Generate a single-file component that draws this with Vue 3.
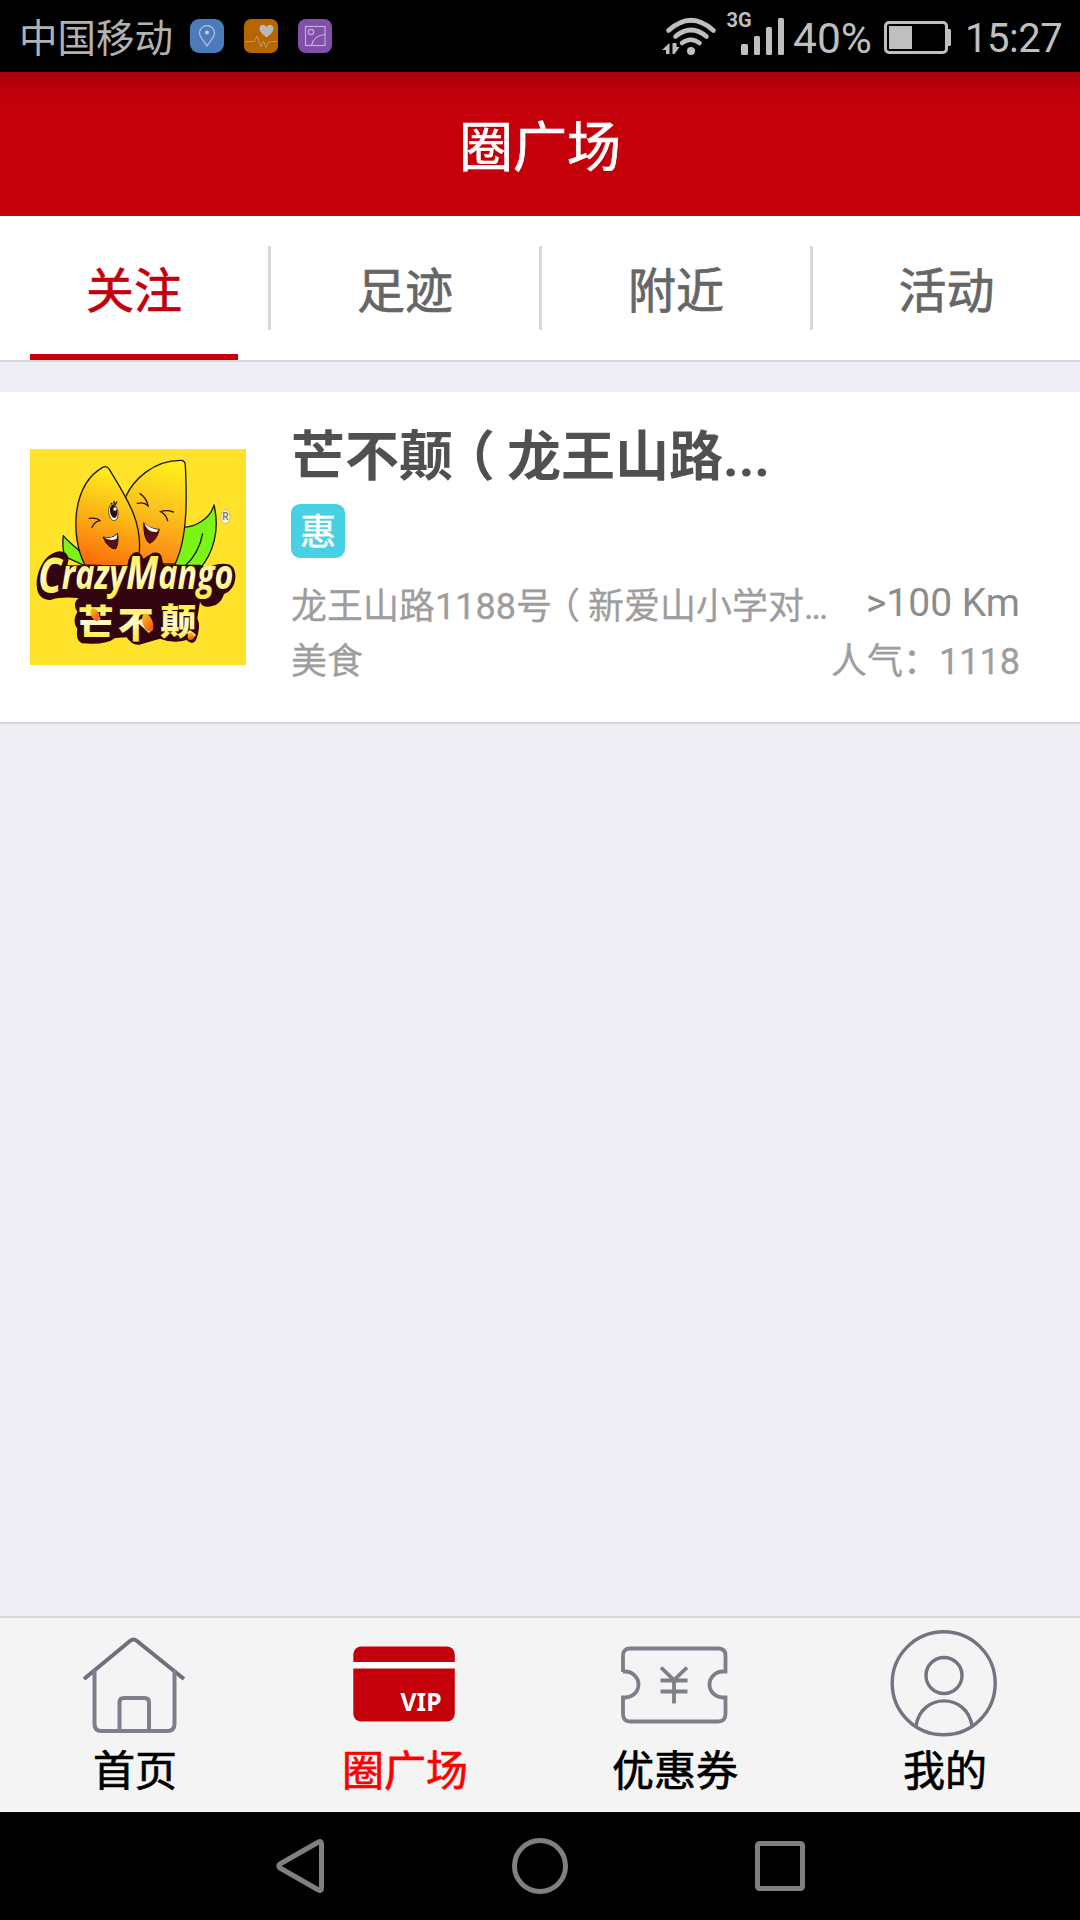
<script setup>
const tabs = ['关注', '足迹', '附近', '活动']
const activeTab = '关注'
const items = [
  { key: 'home', label: '首页' },
  { key: 'square', label: '圈广场' },
  { key: 'coupon', label: '优惠券' },
  { key: 'me', label: '我的' },
]
const current = 'square'
</script>

<template>
  <div class="screen">
    <div class="status">
      <span class="carrier">中国移动</span>
      <svg class="app-icon" viewBox="0 0 34 34">
        <rect width="34" height="34" rx="9" fill="#4b7bbb" />
        <path d="M17 27C13 21 9.500 18 9.500 14a7.500 7.300 0 0 1 15 0C24.500 18 21 21 17 27z" fill="none" stroke="#b8c4d4" stroke-width="1.2" />
        <circle cx="17" cy="13.500" r="2" fill="#c3ccd8" />
      </svg>
      <svg class="app-icon" viewBox="0 0 34 34">
        <rect width="34" height="34" rx="7" fill="#b76500" />
        <path d="M22.500 18.500C18 15 15.500 12.500 15.500 9.500c0-4 5-5 7-1.500 2-3.500 7-2.500 7 1.500 0 3-2.500 5.500-7 9z" fill="#b8b8b8" />
        <path d="M1 22.700H10L13 17l4 11 2.500-6 2.500 6.500 2.500-6 1.500 1 1.500-1H33" fill="none" stroke="#bfa27c" stroke-width="0.900" />
      </svg>
      <svg class="app-icon" viewBox="0 0 34 34">
        <rect width="34" height="34" rx="8" fill="#824fab" />
        <g fill="none" stroke="#c0afd0" stroke-width="1.2">
          <rect x="7.500" y="7.500" width="19.500" height="19" />
          <circle cx="13" cy="13" r="2.700" />
          <path d="M13.500 26.500C15 20 20 16 27 15.500" />
        </g>
      </svg>
      <svg class="signals" viewBox="0 0 126 72">
        <g fill="none" stroke="#bfbfbf" stroke-width="4.600" stroke-linecap="round">
          <path d="M8.500 30.500Q31 10 53.500 30.500" />
          <path d="M15.500 36.500Q31 23.500 46.500 36.500" />
          <path d="M22 43Q31 36.500 39.500 43" />
        </g>
        <circle cx="31" cy="51" r="4" fill="#bfbfbf" />
        <path d="M9.500 43v11H6v-4H2zM12.500 43h4v4h3l-5 7h-2z" fill="#bfbfbf" />
        <text x="66.500" y="27" class="net">3G</text>
        <g fill="#bfbfbf">
          <rect x="81" y="44" width="7" height="11" rx="1.500" />
          <rect x="94" y="36" width="6" height="19" rx="1.500" />
          <rect x="106" y="27" width="6" height="28" rx="1.500" />
          <rect x="118" y="18" width="6" height="37" rx="1.500" />
        </g>
      </svg>
      <span class="percent">40%</span>
      <svg class="battery" viewBox="0 0 68 34">
        <rect x="1.500" y="1.500" width="61" height="30" rx="3.500" fill="none" stroke="#bfbfbf" stroke-width="3" />
        <rect x="5" y="5" width="23" height="23" fill="#bfbfbf" />
        <path d="M64 8h1.500q1.500 0 1.500 1.500v14q0 1.500-1.500 1.500H64z" fill="#bfbfbf" />
      </svg>
      <span class="clock">15:27</span>
    </div>

    <header class="header">圈广场</header>

    <nav class="tabs">
      <template v-for="(t, i) in tabs" :key="t">
        <i v-if="i" class="divider"></i>
        <div class="tab" :class="{ active: t === activeTab }"><span>{{ t }}</span></div>
      </template>
    </nav>

    <main class="content">
      <article class="shop">
        <svg class="logo" viewBox="30 27 648 648">
          <defs>
            <linearGradient id="mangoL" x1="0.550" y1="0" x2="0.350" y2="1">
              <stop offset="0" stop-color="#fff11c" />
              <stop offset="0.450" stop-color="#fcba18" />
              <stop offset="1" stop-color="#fb6a08" />
            </linearGradient>
            <linearGradient id="mangoR" x1="0.600" y1="0" x2="0.450" y2="1">
              <stop offset="0" stop-color="#fff01c" />
              <stop offset="0.500" stop-color="#fbc01c" />
              <stop offset="1" stop-color="#f98210" />
            </linearGradient>
            <linearGradient id="letter" x1="0" y1="0" x2="0" y2="1">
              <stop offset="0.250" stop-color="#fff04e" />
              <stop offset="0.550" stop-color="#fffcd0" />
              <stop offset="0.800" stop-color="#ffee4a" />
            </linearGradient>
            <linearGradient id="seed" x1="0" y1="0" x2="0.300" y2="1">
              <stop offset="0" stop-color="#ffc820" />
              <stop offset="1" stop-color="#f45a14" />
            </linearGradient>
          </defs>
          <rect x="30" y="27" width="648" height="648" fill="#ffe22a" />
          <g stroke="#1d1606" stroke-width="4" stroke-linejoin="round">
            <path d="M130 287C155 320 190 325 200 380L135 350C128 330 127 310 130 287z" fill="#7cf418" />
            <path d="M582 195C570 240 520 262 490 262L465 375L540 385C580 340 600 270 582 195z" fill="#7cf418" />
            <path d="M548 280C540 325 520 355 495 378" fill="none" />
            <path d="M317 170C340 120 400 60 484 61Q495 62 496 76C500 160 505 290 465 372L350 372z" fill="url(#mangoR)" />
            <path d="M195 375C150 290 155 135 248 82Q260 76 268 88C310 160 370 240 357 345L330 380z" fill="url(#mangoL)" />
          </g>
          <g fill="none" stroke="#30150d" stroke-width="4" stroke-linecap="round">
            <path d="M352 190q20-5 32 7q-4-22-24-36M460 216q-22-8-38-1q16 8 21 27" />
            <path d="M208 235q22-3 32 7q-17 3-24 20M274 190l4 8M282 184l1 10M290 186l-4 8" />
          </g>
          <ellipse cx="280" cy="217" rx="14" ry="25" fill="#fff" stroke="#26120e" stroke-width="2" transform="rotate(-8 280 217)" />
          <ellipse cx="281" cy="214" rx="11" ry="20" fill="#2a1014" transform="rotate(-8 281 214)" />
          <circle cx="285" cy="207" r="5" fill="#fff" />
          <path d="M249 291Q276 299 293 280Q297 310 287 327Q264 326 249 291z" fill="#5b0d18" stroke="#2a0d10" stroke-width="3" />
          <path d="M252 292Q276 298 292 283L290 296Q270 306 252 292z" fill="#fff" />
          <path d="M371 248Q390 268 418 268Q410 302 389 310Q371 300 371 248z" fill="#5b0d18" stroke="#2a0d10" stroke-width="3" />
          <path d="M373 250Q392 268 416 269L410 276Q382 278 373 250z" fill="#fff" />
          <ellipse cx="616" cy="230" rx="14" ry="21" fill="#fffbd8" stroke="#aaa078" stroke-width="2" />
          <text x="607" y="241" class="reg">R</text>

          <path d="M50 435C50 385 80 338 118 334Q142 334 146 356L142 376H322Q328 338 350 336Q364 338 370 356L398 338Q420 334 425 350L430 374H540L560 384Q600 366 630 374Q648 384 646 416Q642 450 612 462Q600 500 562 500Q545 500 540 485L532 535Q544 560 528 600Q518 618 500 600Q460 612 420 596Q385 606 358 614Q335 616 320 592L285 594Q260 616 185 610Q166 600 172 566Q155 545 172 515Q155 490 176 474Q120 470 92 480Q52 480 50 435z" fill="#32040f" />
          <text class="brand" x="54" y="452" textLength="586" lengthAdjust="spacingAndGlyphs"><tspan font-size="146" dy="8">C</tspan><tspan font-size="122" dy="-14">razy</tspan><tspan font-size="138" dy="2">M</tspan><tspan font-size="122">ango</tspan></text>
          <text class="brand-cn" font-size="108" x="173 293 421" y="588 593 585">芒不颠</text>
          <ellipse cx="225" cy="524" rx="12" ry="20" fill="url(#seed)" transform="rotate(-25 225 524)" />
          <ellipse cx="383" cy="548" rx="15" ry="28" fill="url(#seed)" transform="rotate(-20 383 548)" />
          <ellipse cx="512" cy="589" rx="9" ry="11" fill="url(#seed)" />
        </svg>
        <div class="info">
          <h2 class="name">芒不颠<span class="paren">（</span>龙王山路...</h2>
          <span class="badge">惠</span>
          <div class="row address-row">
            <span class="address">龙王山路1188号<span class="paren">（</span>新爱山小学对<span class="dots">...</span></span>
            <span class="distance">&gt;100 Km</span>
          </div>
          <div class="row">
            <span>美食</span>
            <span>人气：1118</span>
          </div>
        </div>
      </article>
    </main>

    <footer class="tabbar">
      <div v-for="it in items" :key="it.key" class="item" :class="{ on: it.key === current }">
        <svg v-if="it.key === 'home'" class="icon" viewBox="0 0 110 110" fill="none" stroke="#7b8089" stroke-width="4">
          <path d="M4 49L50 11Q53.500 8 57 11L104 49" stroke="#6c717b" />
          <path d="M14.500 40V94Q14.500 101 21.500 101H87Q94.500 101 94.500 94V40" />
          <path d="M39.500 100V72Q39.500 68 44 68H64.500Q69 68 69 72V100" />
        </svg>
        <svg v-else-if="it.key === 'square'" class="icon" viewBox="0 0 110 110">
          <rect x="3.300" y="16.500" width="101.500" height="75" rx="8" fill="#c4000b" />
          <rect x="2.500" y="32" width="103" height="6.500" fill="#fff" />
          <text x="50.500" y="80.500" class="vip" textLength="41" lengthAdjust="spacingAndGlyphs">VIP</text>
        </svg>
        <svg v-else-if="it.key === 'coupon'" class="icon" viewBox="0 0 110 110" fill="none" stroke="#7b8089" stroke-width="3.800">
          <path d="M3 42V25.500Q3 18.500 10 18.500H98Q105.500 18.500 105.500 25.500V41.500H103A13.500 13 0 0 0 103 67.500H105.500V84Q105.500 91.500 98 91.500H10Q3 91.500 3 84V67.500H5A13.500 13 0 0 0 5 41.500H3" />
          <path d="M41 37.500L54 50L67 37.500M40.500 50.500H67.500M40.500 61.500H67.500M54 49V73.500" />
        </svg>
        <svg v-else class="icon" viewBox="0 0 110 110" fill="none" stroke="#70757f" stroke-width="3.400">
          <circle cx="53.700" cy="53.300" r="51.500" />
          <circle cx="54" cy="45.500" r="18" />
          <path d="M26 96C31 62.500 77 62.500 82 96" />
        </svg>
        <span>{{ it.label }}</span>
      </div>
    </footer>

    <div class="sysnav">
      <svg viewBox="0 0 60 60"><path d="M48.500 6Q51.500 4.500 51.500 8V52Q51.500 55.500 48.500 54L10 32Q7.500 30 10 28z" /></svg>
      <svg viewBox="0 0 60 60"><circle cx="30" cy="30" r="25.500" /></svg>
      <svg viewBox="0 0 60 60"><rect x="7.500" y="7.500" width="45" height="45" rx="2" /></svg>
    </div>
  </div>
</template>

<style>
body { margin: 0; background: #efeef4; }
</style>

<style scoped>
.screen {
  width: 1080px;
  height: 1920px;
  display: flex;
  flex-direction: column;
  background: #efeef4;
  font-family: Roboto, "Noto Sans CJK SC", sans-serif;
  overflow: hidden;
}
.status {
  flex: none;
  height: 72px;
  box-sizing: border-box;
  padding: 0 18px 0 19px;
  display: flex;
  align-items: center;
  background: #000;
  color: #bfbfbf;
}
.carrier { font-size: 38.500px; line-height: 72px; color: #b2b2b2; width: 171px; padding-top: 6px; }
.app-icon { width: 34px; height: 34px; margin-right: 20px; }
.signals { width: 126px; height: 72px; margin-left: auto; }
.net { font: 700 20px Roboto, sans-serif; fill: #bfbfbf; }
.percent { font-size: 42.500px; width: 91px; line-height: 74px; padding-top: 5px; margin-left: 7px; }
.battery { width: 68px; height: 34px; margin-top: 3px; }
.clock { font-size: 40px; letter-spacing: -0.500px; width: 97px; margin-left: 13px; line-height: 74px; padding-top: 5px; }
.header {
  flex: none;
  height: 144px;
  line-height: 154px;
  text-align: center;
  font-size: 54px;
  color: #fff;
  -webkit-text-stroke: 0.700px currentColor;
  background: linear-gradient(#a70009, #bc000a 16px, #c4000b 40px);
}
.tabs {
  flex: none;
  height: 144px;
  display: flex;
  align-items: center;
  background: #fff;
  border-bottom: 2px solid #d8d8d8;
}
.tab {
  flex: none;
  width: 268px;
  height: 144px;
  box-sizing: border-box;
  padding: 0 30px;
  text-align: center;
  font-size: 48px;
  line-height: 151px;
  color: #666;
  -webkit-text-stroke: 0.700px currentColor;
}
.tab:last-child { width: 267px; }
.tab span { display: block; height: 138px; }
.tab.active { color: #c4000b; }
.tab.active span { border-bottom: 6px solid #c4000b; }
.divider { width: 3px; height: 84px; background: #dadada; }
.content { flex: 1; padding-top: 30px; }
.shop {
  height: 330px;
  display: flex;
  background: #fff;
  border-bottom: 2px solid #d8d8d8;
}
.logo { flex: none; width: 216px; height: 216px; margin: 57px 45px 0 30px; }
.info { width: 729px; display: flex; flex-direction: column; align-items: flex-start; }
.name { margin: 24px 0 0; height: 88px; line-height: 83px; font-size: 54px; font-weight: 700; color: #505050; white-space: nowrap; }
.paren { font-feature-settings: "halt"; margin: 0 0.220em 0 0.280em; }
.dots { letter-spacing: -2px; }
.badge {
  width: 54px;
  height: 54px;
  border-radius: 9px;
  background: #48d1e3;
  color: #fff;
  font-size: 36px;
  line-height: 58px;
  text-align: center;
  -webkit-text-stroke: 0.500px currentColor;
}
.row {
  width: 100%;
  height: 55px;
  line-height: 58px;
  display: flex;
  justify-content: space-between;
  font-size: 36px;
  color: #9d9d9d;
  white-space: nowrap;
  -webkit-text-stroke: 0.300px currentColor;
}
.address-row { margin-top: 20px; }
.distance { font-size: 39px; line-height: 51px; color: #8c8c8c; -webkit-text-stroke: 0; }
.tabbar {
  flex: none;
  height: 194px;
  display: flex;
  background: #f4f4f4;
  border-top: 2px solid #dadada;
}
.item {
  flex: 1;
  display: flex;
  flex-direction: column;
  align-items: center;
  padding-top: 12px;
  font-size: 42px;
  line-height: 54px;
  color: #000;
}
.item span { margin-top: 5px; -webkit-text-stroke: 0.700px currentColor; }
.item.on { color: #f00; }
.icon { width: 110px; height: 110px; }
.vip { font: 700 25px "Noto Sans", sans-serif; fill: #fff; }
.sysnav {
  flex: none;
  height: 108px;
  display: flex;
  justify-content: center;
  align-items: center;
  gap: 180px;
  background: #000;
}
.sysnav svg { width: 60px; height: 60px; fill: none; stroke: #808080; stroke-width: 5; stroke-linejoin: round; }
.brand, .brand-cn { fill: url(#letter); }
.brand { font-family: "Open Sans", sans-serif; font-style: italic; font-weight: 700; }
.brand-cn { font-family: "Noto Sans CJK SC", sans-serif; font-weight: 900; }
.reg { font: 700 30px Roboto, sans-serif; fill: #8a8468; }
</style>
